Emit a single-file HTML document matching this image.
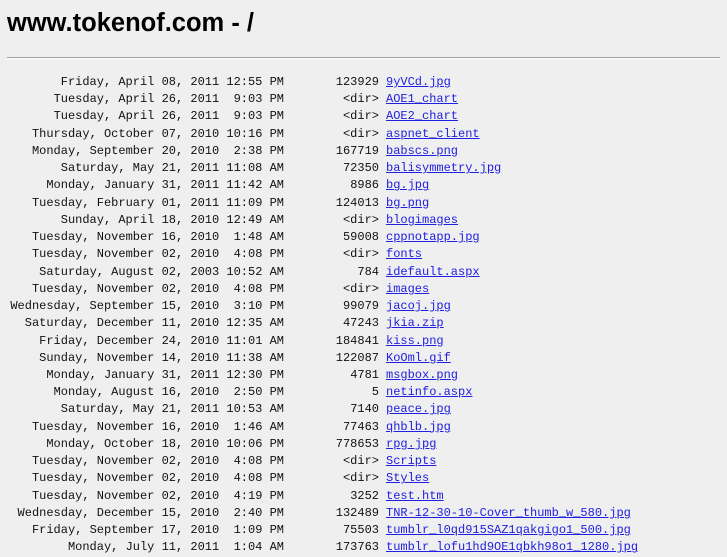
<!DOCTYPE html>
<html><head><meta charset="utf-8"><style>
html,body{margin:0;padding:0;background:#efefef;width:727px;height:545px;overflow:hidden}
h1{position:absolute;left:7px;top:9px;margin:0;font:bold 25.5px "Liberation Sans",sans-serif;color:#000;white-space:nowrap}
.hr{position:absolute;left:7px;top:57px;width:713px;height:0;border-top:1px solid #a0a0a0;border-bottom:1px solid #fff}
.list{position:absolute;left:7px;top:74px;font:12px "Liberation Mono",monospace;color:#111;line-height:17.24px}
.r{height:17.24px;white-space:pre}
.d{display:inline-block;width:277px;text-align:right}
.s{display:inline-block;width:95px;text-align:right;margin-right:7px}
a{color:#2020e0;text-decoration:underline}
</style></head><body>
<h1>www.tokenof.com - /</h1>
<div class="hr"></div>
<div class="list"><div class="r"><span class="d">Friday, April 08, 2011 12:55 PM</span><span class="s">123929</span><a>9yVCd.jpg</a></div><div class="r"><span class="d">Tuesday, April 26, 2011  9:03 PM</span><span class="s">&lt;dir&gt;</span><a>AOE1_chart</a></div><div class="r"><span class="d">Tuesday, April 26, 2011  9:03 PM</span><span class="s">&lt;dir&gt;</span><a>AOE2_chart</a></div><div class="r"><span class="d">Thursday, October 07, 2010 10:16 PM</span><span class="s">&lt;dir&gt;</span><a>aspnet_client</a></div><div class="r"><span class="d">Monday, September 20, 2010  2:38 PM</span><span class="s">167719</span><a>babscs.png</a></div><div class="r"><span class="d">Saturday, May 21, 2011 11:08 AM</span><span class="s">72350</span><a>balisymmetry.jpg</a></div><div class="r"><span class="d">Monday, January 31, 2011 11:42 AM</span><span class="s">8986</span><a>bg.jpg</a></div><div class="r"><span class="d">Tuesday, February 01, 2011 11:09 PM</span><span class="s">124013</span><a>bg.png</a></div><div class="r"><span class="d">Sunday, April 18, 2010 12:49 AM</span><span class="s">&lt;dir&gt;</span><a>blogimages</a></div><div class="r"><span class="d">Tuesday, November 16, 2010  1:48 AM</span><span class="s">59008</span><a>cppnotapp.jpg</a></div><div class="r"><span class="d">Tuesday, November 02, 2010  4:08 PM</span><span class="s">&lt;dir&gt;</span><a>fonts</a></div><div class="r"><span class="d">Saturday, August 02, 2003 10:52 AM</span><span class="s">784</span><a>idefault.aspx</a></div><div class="r"><span class="d">Tuesday, November 02, 2010  4:08 PM</span><span class="s">&lt;dir&gt;</span><a>images</a></div><div class="r"><span class="d">Wednesday, September 15, 2010  3:10 PM</span><span class="s">99079</span><a>jacoj.jpg</a></div><div class="r"><span class="d">Saturday, December 11, 2010 12:35 AM</span><span class="s">47243</span><a>jkia.zip</a></div><div class="r"><span class="d">Friday, December 24, 2010 11:01 AM</span><span class="s">184841</span><a>kiss.png</a></div><div class="r"><span class="d">Sunday, November 14, 2010 11:38 AM</span><span class="s">122087</span><a>KoOml.gif</a></div><div class="r"><span class="d">Monday, January 31, 2011 12:30 PM</span><span class="s">4781</span><a>msgbox.png</a></div><div class="r"><span class="d">Monday, August 16, 2010  2:50 PM</span><span class="s">5</span><a>netinfo.aspx</a></div><div class="r"><span class="d">Saturday, May 21, 2011 10:53 AM</span><span class="s">7140</span><a>peace.jpg</a></div><div class="r"><span class="d">Tuesday, November 16, 2010  1:46 AM</span><span class="s">77463</span><a>qhblb.jpg</a></div><div class="r"><span class="d">Monday, October 18, 2010 10:06 PM</span><span class="s">778653</span><a>rpg.jpg</a></div><div class="r"><span class="d">Tuesday, November 02, 2010  4:08 PM</span><span class="s">&lt;dir&gt;</span><a>Scripts</a></div><div class="r"><span class="d">Tuesday, November 02, 2010  4:08 PM</span><span class="s">&lt;dir&gt;</span><a>Styles</a></div><div class="r"><span class="d">Tuesday, November 02, 2010  4:19 PM</span><span class="s">3252</span><a>test.htm</a></div><div class="r"><span class="d">Wednesday, December 15, 2010  2:40 PM</span><span class="s">132489</span><a>TNR-12-30-10-Cover_thumb_w_580.jpg</a></div><div class="r"><span class="d">Friday, September 17, 2010  1:09 PM</span><span class="s">75503</span><a>tumblr_l0qd915SAZ1qakgigo1_500.jpg</a></div><div class="r"><span class="d">Monday, July 11, 2011  1:04 AM</span><span class="s">173763</span><a>tumblr_lofu1hd9OE1qbkh98o1_1280.jpg</a></div></div>
</body></html>
